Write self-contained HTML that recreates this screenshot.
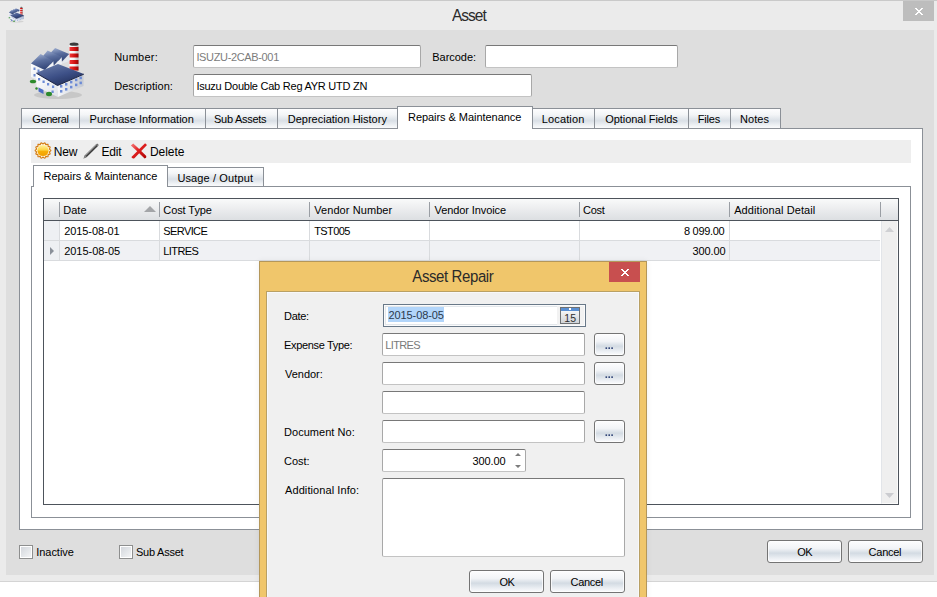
<!DOCTYPE html><html><head><meta charset="utf-8"><style>
html,body{margin:0;padding:0;}
body{width:937px;height:597px;position:relative;overflow:hidden;background:#fff;font-family:"Liberation Sans",sans-serif;}
.b{position:absolute;box-sizing:border-box;}
.t{position:absolute;white-space:nowrap;}
svg{position:absolute;overflow:visible;}
</style></head><body>
<div class="b" style="left:0px;top:0px;width:937px;height:582px;background:#ebebeb;border-top:1px solid #c9c9c9;border-bottom:1px solid #d4d4d4;"></div>
<svg style="left:8.4px;top:6.3px" width="17.3" height="16.9" preserveAspectRatio="none" viewBox="0 0 60 60">
<defs>
<linearGradient id="sfr1" x1="0" y1="0" x2="0.3" y2="1"><stop offset="0" stop-color="#a9b8d8"/><stop offset="0.5" stop-color="#5b6f9f"/><stop offset="1" stop-color="#34477a"/></linearGradient>
<linearGradient id="sfr2" x1="0" y1="0" x2="0.6" y2="1"><stop offset="0" stop-color="#6f82ae"/><stop offset="0.6" stop-color="#3d5087"/><stop offset="1" stop-color="#25335f"/></linearGradient>
<linearGradient id="schim" x1="0" y1="0" x2="1" y2="0"><stop offset="0" stop-color="#ffffff"/><stop offset="0.5" stop-color="#f4f4f4"/><stop offset="1" stop-color="#b8b8b8"/></linearGradient>
<linearGradient id="schimr" x1="0" y1="0" x2="1" y2="0"><stop offset="0" stop-color="#f03a3a"/><stop offset="0.6" stop-color="#d01010"/><stop offset="1" stop-color="#900808"/></linearGradient>
<linearGradient id="swl" x1="0" y1="0" x2="1" y2="1"><stop offset="0" stop-color="#ffffff"/><stop offset="1" stop-color="#dfe3ea"/></linearGradient>
<linearGradient id="swr" x1="0" y1="0" x2="1" y2="0"><stop offset="0" stop-color="#f6f7fa"/><stop offset="1" stop-color="#c4c9d2"/></linearGradient>
</defs>
<ellipse cx="30" cy="55" rx="24" ry="4" fill="#000" opacity=".10"/>
<!-- chimney -->
<rect x="41.5" y="4" width="9" height="27" fill="url(#schim)"/>
<rect x="41.5" y="7" width="9" height="4" fill="url(#schimr)"/>
<rect x="41.5" y="13.5" width="9" height="4" fill="url(#schimr)"/>
<rect x="41.5" y="20" width="9" height="4" fill="url(#schimr)"/>
<rect x="41.5" y="26.5" width="9" height="4" fill="url(#schimr)"/>
<ellipse cx="46" cy="4.2" rx="4.5" ry="1.6" fill="#3a3a3a"/>
<!-- back building walls -->
<polygon points="3,23.5 17,30 17,43 3,37" fill="url(#swl)"/>
<rect x="5.5" y="27.5" width="2" height="2.5" fill="#6d8ad0"/><rect x="9.5" y="29.5" width="2" height="2.5" fill="#6d8ad0"/>
<rect x="5.5" y="34" width="2" height="2.5" fill="#6d8ad0"/>
<!-- sawtooth roofs -->
<polygon points="41.2,14 41.5,21 33,24" fill="#e4e8ee"/>
<polygon points="19.6,16 27.1,8 41.2,14 33.5,22" fill="url(#sfr1)"/>
<polygon points="33.7,17 34,24 25.5,26.5" fill="#eceff4"/>
<polygon points="12.6,19 19.6,10.5 33.7,17 25.3,26" fill="url(#sfr1)"/>
<polygon points="25.3,21.2 26,28 16.8,30" fill="#f2f4f7"/>
<polygon points="3,23.5 12.6,14.1 25.3,21.2 16.8,30" fill="url(#sfr1)"/>
<!-- front building -->
<polygon points="8,33 29.5,45.5 29.8,57 8.5,46.5" fill="url(#swl)"/>
<polygon points="29.5,45.5 55.5,34 55.5,46 29.8,57" fill="url(#swr)"/>
<polygon points="8,33 30,24 55.8,34 29.5,45.5" fill="url(#sfr2)"/>
<path d="M8.5 33.3 L29.5 45.5 L55.8 34.2" stroke="#1c2444" stroke-width="1" fill="none"/>
<g fill="#6c8bd6">
<rect x="10" y="38" width="2.2" height="2.5"/><rect x="14.5" y="40.5" width="2.2" height="2.5"/><rect x="19" y="43" width="2.2" height="2.5"/><rect x="24" y="45.5" width="2.2" height="2.5"/>
<rect x="23.5" y="50.5" width="2.2" height="2.5"/>
<rect x="32" y="45" width="2.4" height="2.6"/><rect x="37" y="43" width="2.4" height="2.6"/><rect x="42" y="40.8" width="2.4" height="2.6"/><rect x="47" y="38.6" width="2.4" height="2.6"/><rect x="51.5" y="36.6" width="2.4" height="2.6"/>
<rect x="32" y="50" width="2.4" height="2.6"/><rect x="37" y="48" width="2.4" height="2.6"/><rect x="42" y="45.8" width="2.4" height="2.6"/><rect x="47" y="43.6" width="2.4" height="2.6"/><rect x="51.5" y="41.6" width="2.4" height="2.6"/>
</g>
<polygon points="10.5,47.5 15.5,50 15.5,54 10.5,51.5" fill="#4a6cc4"/>
<ellipse cx="5" cy="41.5" rx="3.2" ry="1.8" fill="#2c8a2c"/>
<ellipse cx="21" cy="54" rx="3" ry="2.2" fill="#2c8a2c"/>
<ellipse cx="8.5" cy="48.5" rx="1.2" ry="1.2" fill="#2c8a2c"/>
</svg>
<div class="t" style="left:452.0px;top:8px;font-size:15.5px;line-height:15.5px;color:#2a2a2a;letter-spacing:-1.0px;transform:scaleY(1.05);transform-origin:0 13px;">Asset</div>
<div class="b" style="left:903px;top:1px;width:31px;height:20px;background:#bdbdbd;"></div>
<svg style="left:915px;top:8px" width="8" height="7" viewBox="0 0 8 7" shape-rendering="crispEdges"><g fill="#fff"><rect x="0" y="0" width="1" height="1"/><rect x="1" y="0" width="1" height="1"/><rect x="6" y="0" width="1" height="1"/><rect x="7" y="0" width="1" height="1"/><rect x="1" y="1" width="1" height="1"/><rect x="2" y="1" width="1" height="1"/><rect x="5" y="1" width="1" height="1"/><rect x="6" y="1" width="1" height="1"/><rect x="2" y="2" width="1" height="1"/><rect x="3" y="2" width="1" height="1"/><rect x="4" y="2" width="1" height="1"/><rect x="5" y="2" width="1" height="1"/><rect x="3" y="3" width="1" height="1"/><rect x="4" y="3" width="1" height="1"/><rect x="2" y="4" width="1" height="1"/><rect x="3" y="4" width="1" height="1"/><rect x="4" y="4" width="1" height="1"/><rect x="5" y="4" width="1" height="1"/><rect x="1" y="5" width="1" height="1"/><rect x="2" y="5" width="1" height="1"/><rect x="5" y="5" width="1" height="1"/><rect x="6" y="5" width="1" height="1"/><rect x="0" y="6" width="1" height="1"/><rect x="1" y="6" width="1" height="1"/><rect x="6" y="6" width="1" height="1"/><rect x="7" y="6" width="1" height="1"/></g></svg>
<div class="b" style="left:6px;top:30px;width:928px;height:545px;background:#dedede;"></div>
<svg style="left:28px;top:40px" width="60" height="60" viewBox="0 0 60 60">
<defs>
<linearGradient id="fr1" x1="0" y1="0" x2="0.3" y2="1"><stop offset="0" stop-color="#a9b8d8"/><stop offset="0.5" stop-color="#5b6f9f"/><stop offset="1" stop-color="#34477a"/></linearGradient>
<linearGradient id="fr2" x1="0" y1="0" x2="0.6" y2="1"><stop offset="0" stop-color="#6f82ae"/><stop offset="0.6" stop-color="#3d5087"/><stop offset="1" stop-color="#25335f"/></linearGradient>
<linearGradient id="chim" x1="0" y1="0" x2="1" y2="0"><stop offset="0" stop-color="#ffffff"/><stop offset="0.5" stop-color="#f4f4f4"/><stop offset="1" stop-color="#b8b8b8"/></linearGradient>
<linearGradient id="chimr" x1="0" y1="0" x2="1" y2="0"><stop offset="0" stop-color="#f03a3a"/><stop offset="0.6" stop-color="#d01010"/><stop offset="1" stop-color="#900808"/></linearGradient>
<linearGradient id="wl" x1="0" y1="0" x2="1" y2="1"><stop offset="0" stop-color="#ffffff"/><stop offset="1" stop-color="#dfe3ea"/></linearGradient>
<linearGradient id="wr" x1="0" y1="0" x2="1" y2="0"><stop offset="0" stop-color="#f6f7fa"/><stop offset="1" stop-color="#c4c9d2"/></linearGradient>
</defs>
<ellipse cx="30" cy="55" rx="24" ry="4" fill="#000" opacity=".10"/>
<!-- chimney -->
<rect x="41.5" y="4" width="9" height="27" fill="url(#chim)"/>
<rect x="41.5" y="7" width="9" height="4" fill="url(#chimr)"/>
<rect x="41.5" y="13.5" width="9" height="4" fill="url(#chimr)"/>
<rect x="41.5" y="20" width="9" height="4" fill="url(#chimr)"/>
<rect x="41.5" y="26.5" width="9" height="4" fill="url(#chimr)"/>
<ellipse cx="46" cy="4.2" rx="4.5" ry="1.6" fill="#3a3a3a"/>
<!-- back building walls -->
<polygon points="3,23.5 17,30 17,43 3,37" fill="url(#wl)"/>
<rect x="5.5" y="27.5" width="2" height="2.5" fill="#6d8ad0"/><rect x="9.5" y="29.5" width="2" height="2.5" fill="#6d8ad0"/>
<rect x="5.5" y="34" width="2" height="2.5" fill="#6d8ad0"/>
<!-- sawtooth roofs -->
<polygon points="41.2,14 41.5,21 33,24" fill="#e4e8ee"/>
<polygon points="19.6,16 27.1,8 41.2,14 33.5,22" fill="url(#fr1)"/>
<polygon points="33.7,17 34,24 25.5,26.5" fill="#eceff4"/>
<polygon points="12.6,19 19.6,10.5 33.7,17 25.3,26" fill="url(#fr1)"/>
<polygon points="25.3,21.2 26,28 16.8,30" fill="#f2f4f7"/>
<polygon points="3,23.5 12.6,14.1 25.3,21.2 16.8,30" fill="url(#fr1)"/>
<!-- front building -->
<polygon points="8,33 29.5,45.5 29.8,57 8.5,46.5" fill="url(#wl)"/>
<polygon points="29.5,45.5 55.5,34 55.5,46 29.8,57" fill="url(#wr)"/>
<polygon points="8,33 30,24 55.8,34 29.5,45.5" fill="url(#fr2)"/>
<path d="M8.5 33.3 L29.5 45.5 L55.8 34.2" stroke="#1c2444" stroke-width="1" fill="none"/>
<g fill="#6c8bd6">
<rect x="10" y="38" width="2.2" height="2.5"/><rect x="14.5" y="40.5" width="2.2" height="2.5"/><rect x="19" y="43" width="2.2" height="2.5"/><rect x="24" y="45.5" width="2.2" height="2.5"/>
<rect x="23.5" y="50.5" width="2.2" height="2.5"/>
<rect x="32" y="45" width="2.4" height="2.6"/><rect x="37" y="43" width="2.4" height="2.6"/><rect x="42" y="40.8" width="2.4" height="2.6"/><rect x="47" y="38.6" width="2.4" height="2.6"/><rect x="51.5" y="36.6" width="2.4" height="2.6"/>
<rect x="32" y="50" width="2.4" height="2.6"/><rect x="37" y="48" width="2.4" height="2.6"/><rect x="42" y="45.8" width="2.4" height="2.6"/><rect x="47" y="43.6" width="2.4" height="2.6"/><rect x="51.5" y="41.6" width="2.4" height="2.6"/>
</g>
<polygon points="10.5,47.5 15.5,50 15.5,54 10.5,51.5" fill="#4a6cc4"/>
<ellipse cx="5" cy="41.5" rx="3.2" ry="1.8" fill="#2c8a2c"/>
<ellipse cx="21" cy="54" rx="3" ry="2.2" fill="#2c8a2c"/>
<ellipse cx="8.5" cy="48.5" rx="1.2" ry="1.2" fill="#2c8a2c"/>
</svg>
<div class="t" style="left:114.2px;top:52px;font-size:11px;line-height:11px;color:#000;letter-spacing:0.23px;">Number:</div>
<div class="b" style="left:193px;top:45px;width:228px;height:23px;background:#fff;border:1px solid #c3c3c3;border-top-color:#787878;border-left-color:#a8a8a8;border-right-color:#a8a8a8;border-radius:2px;"></div>
<div class="t" style="left:196.4px;top:52px;font-size:11px;line-height:11px;color:#7c7c7c;letter-spacing:-0.35px;">ISUZU-2CAB-001</div>
<div class="t" style="left:432.3px;top:52px;font-size:11px;line-height:11px;color:#000;letter-spacing:-0.04px;">Barcode:</div>
<div class="b" style="left:485px;top:45px;width:193px;height:23px;background:#fff;border:1px solid #c3c3c3;border-top-color:#787878;border-left-color:#a8a8a8;border-right-color:#a8a8a8;border-radius:2px;"></div>
<div class="t" style="left:114.2px;top:81px;font-size:11px;line-height:11px;color:#000;letter-spacing:0.06px;">Description:</div>
<div class="b" style="left:193px;top:74px;width:339px;height:23px;background:#fff;border:1px solid #c3c3c3;border-top-color:#787878;border-left-color:#a8a8a8;border-right-color:#a8a8a8;border-radius:2px;"></div>
<div class="t" style="left:196.4px;top:81px;font-size:11px;line-height:11px;color:#000;letter-spacing:-0.24px;">Isuzu Double Cab Reg AYR UTD ZN</div>
<div class="b" style="left:19px;top:128px;width:904px;height:402px;background:#fff;border:1px solid #8b9097;"></div>
<div class="b" style="left:21px;top:108px;width:59px;height:21px;background:linear-gradient(#fdfdfe 0%,#f3f5f7 30%,#d9dfe6 62%,#eef1f4 85%,#fafbfc 100%);border:1px solid #8b9097;"></div>
<div class="t" style="left:32.3px;top:114px;font-size:11px;line-height:11px;color:#000;letter-spacing:-0.42px;">General</div>
<div class="b" style="left:79px;top:108px;width:127px;height:21px;background:linear-gradient(#fdfdfe 0%,#f3f5f7 30%,#d9dfe6 62%,#eef1f4 85%,#fafbfc 100%);border:1px solid #8b9097;"></div>
<div class="t" style="left:89.6px;top:114px;font-size:11px;line-height:11px;color:#000;letter-spacing:-0.02px;">Purchase Information</div>
<div class="b" style="left:205px;top:108px;width:73px;height:21px;background:linear-gradient(#fdfdfe 0%,#f3f5f7 30%,#d9dfe6 62%,#eef1f4 85%,#fafbfc 100%);border:1px solid #8b9097;"></div>
<div class="t" style="left:214.0px;top:114px;font-size:11px;line-height:11px;color:#000;letter-spacing:-0.27px;">Sub Assets</div>
<div class="b" style="left:277px;top:108px;width:121px;height:21px;background:linear-gradient(#fdfdfe 0%,#f3f5f7 30%,#d9dfe6 62%,#eef1f4 85%,#fafbfc 100%);border:1px solid #8b9097;"></div>
<div class="t" style="left:287.7px;top:114px;font-size:11px;line-height:11px;color:#000;letter-spacing:0.01px;">Depreciation History</div>
<div class="b" style="left:532px;top:108px;width:63px;height:21px;background:linear-gradient(#fdfdfe 0%,#f3f5f7 30%,#d9dfe6 62%,#eef1f4 85%,#fafbfc 100%);border:1px solid #8b9097;"></div>
<div class="t" style="left:541.8px;top:114px;font-size:11px;line-height:11px;color:#000;letter-spacing:0.13px;">Location</div>
<div class="b" style="left:594px;top:108px;width:95px;height:21px;background:linear-gradient(#fdfdfe 0%,#f3f5f7 30%,#d9dfe6 62%,#eef1f4 85%,#fafbfc 100%);border:1px solid #8b9097;"></div>
<div class="t" style="left:605.3px;top:114px;font-size:11px;line-height:11px;color:#000;letter-spacing:-0.06px;">Optional Fields</div>
<div class="b" style="left:688px;top:108px;width:43px;height:21px;background:linear-gradient(#fdfdfe 0%,#f3f5f7 30%,#d9dfe6 62%,#eef1f4 85%,#fafbfc 100%);border:1px solid #8b9097;"></div>
<div class="t" style="left:697.8px;top:114px;font-size:11px;line-height:11px;color:#000;letter-spacing:-0.22px;">Files</div>
<div class="b" style="left:730px;top:108px;width:51px;height:21px;background:linear-gradient(#fdfdfe 0%,#f3f5f7 30%,#d9dfe6 62%,#eef1f4 85%,#fafbfc 100%);border:1px solid #8b9097;"></div>
<div class="t" style="left:740.0px;top:114px;font-size:11px;line-height:11px;color:#000;letter-spacing:0.05px;">Notes</div>
<div class="b" style="left:397px;top:106px;width:136px;height:23px;background:#fff;border:1px solid #8b9097;border-bottom:none;"></div>
<div class="t" style="left:408.0px;top:112px;font-size:11px;line-height:11px;color:#000;letter-spacing:-0.05px;">Repairs &amp; Maintenance</div>
<div class="b" style="left:31px;top:140px;width:880px;height:23px;background:#eeeeee;"></div>
<svg style="left:34px;top:142px" width="18" height="18" viewBox="0 0 18 18">
<defs><linearGradient id="sung" x1="0" y1="0" x2="0" y2="1"><stop offset="0" stop-color="#fff2a0"/><stop offset="0.48" stop-color="#fcd240"/><stop offset="0.54" stop-color="#f7b00a"/><stop offset="1" stop-color="#f2a000"/></linearGradient></defs>
<polygon points="16.85,8.50 16.65,8.93 16.15,9.31 15.65,9.63 15.39,9.96 15.48,10.37 15.80,10.88 16.08,11.43 16.07,11.91 15.70,12.21 15.10,12.33 14.50,12.40 14.12,12.58 14.03,12.99 14.09,13.59 14.10,14.21 13.89,14.64 13.43,14.75 12.83,14.60 12.26,14.40 11.84,14.40 11.58,14.73 11.38,15.30 11.12,15.86 10.75,16.15 10.28,16.05 9.81,15.65 9.38,15.23 9.00,15.05 8.62,15.23 8.19,15.65 7.72,16.05 7.25,16.15 6.88,15.86 6.62,15.30 6.42,14.73 6.16,14.40 5.74,14.40 5.17,14.60 4.57,14.75 4.11,14.64 3.90,14.21 3.91,13.59 3.97,12.99 3.88,12.58 3.50,12.40 2.90,12.33 2.30,12.21 1.93,11.91 1.92,11.43 2.20,10.88 2.52,10.37 2.61,9.96 2.35,9.63 1.85,9.31 1.35,8.93 1.15,8.50 1.35,8.07 1.85,7.69 2.35,7.37 2.61,7.04 2.52,6.63 2.20,6.12 1.92,5.57 1.93,5.09 2.30,4.79 2.90,4.67 3.50,4.60 3.88,4.42 3.97,4.01 3.91,3.41 3.90,2.79 4.11,2.36 4.57,2.25 5.17,2.40 5.74,2.60 6.16,2.60 6.42,2.27 6.62,1.70 6.88,1.14 7.25,0.85 7.72,0.95 8.19,1.35 8.62,1.77 9.00,1.95 9.38,1.77 9.81,1.35 10.28,0.95 10.75,0.85 11.12,1.14 11.38,1.70 11.58,2.27 11.84,2.60 12.26,2.60 12.83,2.40 13.43,2.25 13.89,2.36 14.10,2.79 14.09,3.41 14.03,4.01 14.12,4.42 14.50,4.60 15.10,4.67 15.70,4.79 16.07,5.09 16.08,5.57 15.80,6.12 15.48,6.63 15.39,7.04 15.65,7.37 16.15,7.69 16.65,8.07" fill="#fff8e4" stroke="#d47c14" stroke-width="1.15"/>
<circle cx="9" cy="8.5" r="5.6" fill="url(#sung)"/>
</svg>
<div class="t" style="left:53.8px;top:146px;font-size:12px;line-height:12px;color:#000;letter-spacing:-0.15px;">New</div>
<svg style="left:82px;top:142px" width="18" height="18" viewBox="0 0 18 18">
<path d="M1.5 16.5 L3 13.2 L14.2 2.2 L16.0 4.0 L4.8 15.0 Z" fill="#3c3c3c"/>
<path d="M3 13.2 L14.2 2.2 L14.9 2.9 L3.7 13.9 Z" fill="#9a9a9a"/>
<path d="M1.5 16.5 L3 13.2 L4.8 15.0 Z" fill="#8a8a8a"/>
<path d="M14.2 2.2 L15.2 1.4 L16.8 3.1 L16.0 4.0 Z" fill="#6a6a6a"/>
</svg>
<div class="t" style="left:101.6px;top:146px;font-size:12px;line-height:12px;color:#000;letter-spacing:-0.23px;">Edit</div>
<svg style="left:130px;top:142px" width="18" height="18" viewBox="0 0 18 18">
<defs><linearGradient id="xg" x1="0" y1="0" x2="1" y2="1"><stop offset="0" stop-color="#f58080"/><stop offset="0.45" stop-color="#e02020"/><stop offset="1" stop-color="#a80000"/></linearGradient></defs>
<path d="M0.9 3.6 L3.2 1.4 L9.2 7.1 L15.1 1.3 L17.0 3.0 L11.2 9.1 L16.3 14.1 Q16.8 16.4 14.6 16.6 L9.2 11.2 L4.4 16.2 Q2.0 17.0 1.4 15.0 L7.2 9.2 Z" fill="url(#xg)"/>
</svg>
<div class="t" style="left:149.9px;top:146px;font-size:12px;line-height:12px;color:#000;letter-spacing:-0.04px;">Delete</div>
<div class="b" style="left:31px;top:186px;width:880px;height:332px;background:#fff;border:1px solid #8b9097;"></div>
<div class="b" style="left:167px;top:167px;width:97px;height:20px;background:linear-gradient(#fdfdfe 0%,#f3f5f7 30%,#d9dfe6 62%,#eef1f4 85%,#fafbfc 100%);border:1px solid #8b9097;"></div>
<div class="t" style="left:177.4px;top:173px;font-size:11px;line-height:11px;color:#000;letter-spacing:0.12px;">Usage / Output</div>
<div class="b" style="left:33px;top:165px;width:135px;height:22px;background:#fff;border:1px solid #8b9097;border-bottom:none;"></div>
<div class="t" style="left:43.5px;top:171px;font-size:11px;line-height:11px;color:#000;letter-spacing:-0.02px;">Repairs &amp; Maintenance</div>
<div class="b" style="left:43px;top:198px;width:856px;height:307px;background:#fff;border:1px solid #4d535b;"></div>
<div class="b" style="left:44px;top:199px;width:854px;height:21px;background:linear-gradient(#f9fafa,#ebecee 50%,#dcdfe2);"></div>
<div class="b" style="left:44px;top:220px;width:854px;height:1px;background:#4d535b;"></div>
<div class="b" style="left:59px;top:202px;width:1px;height:15px;background:#9a9ea4;"></div>
<div class="b" style="left:159px;top:202px;width:1px;height:15px;background:#9a9ea4;"></div>
<div class="b" style="left:309px;top:202px;width:1px;height:15px;background:#9a9ea4;"></div>
<div class="b" style="left:429px;top:202px;width:1px;height:15px;background:#9a9ea4;"></div>
<div class="b" style="left:579px;top:202px;width:1px;height:15px;background:#9a9ea4;"></div>
<div class="b" style="left:729px;top:202px;width:1px;height:15px;background:#9a9ea4;"></div>
<div class="b" style="left:880px;top:202px;width:1px;height:15px;background:#9a9ea4;"></div>
<div class="t" style="left:63.2px;top:205px;font-size:11px;line-height:11px;color:#000;letter-spacing:0.03px;">Date</div>
<div class="t" style="left:163.3px;top:205px;font-size:11px;line-height:11px;color:#000;letter-spacing:-0.08px;">Cost Type</div>
<div class="t" style="left:314.2px;top:205px;font-size:11px;line-height:11px;color:#000;letter-spacing:0.08px;">Vendor Number</div>
<div class="t" style="left:434.5px;top:205px;font-size:11px;line-height:11px;color:#000;letter-spacing:-0.09px;">Vendor Invoice</div>
<div class="t" style="left:583.0px;top:205px;font-size:11px;line-height:11px;color:#000;letter-spacing:-0.23px;">Cost</div>
<div class="t" style="left:734.2px;top:205px;font-size:11px;line-height:11px;color:#000;letter-spacing:0.1px;">Additional Detail</div>
<svg style="left:144px;top:206px" width="12" height="6" viewBox="0 0 12 6"><path d="M0 6 L6 0 L12 6 Z" fill="#a3a5a8"/></svg>
<div class="b" style="left:44px;top:221px;width:836px;height:20px;background:#fff;"></div>
<div class="b" style="left:44px;top:241px;width:836px;height:20px;background:#f0f1f4;"></div>
<div class="b" style="left:44px;top:221px;width:15px;height:40px;background:#eef0f3;"></div>
<div class="b" style="left:44px;top:240px;width:836px;height:1px;background:#d9dbde;"></div>
<div class="b" style="left:44px;top:260px;width:836px;height:1px;background:#d9dbde;"></div>
<div class="b" style="left:59px;top:221px;width:1px;height:40px;background:#d9dbde;"></div>
<div class="b" style="left:159px;top:221px;width:1px;height:40px;background:#d9dbde;"></div>
<div class="b" style="left:309px;top:221px;width:1px;height:40px;background:#d9dbde;"></div>
<div class="b" style="left:429px;top:221px;width:1px;height:40px;background:#d9dbde;"></div>
<div class="b" style="left:579px;top:221px;width:1px;height:40px;background:#d9dbde;"></div>
<div class="b" style="left:729px;top:221px;width:1px;height:40px;background:#d9dbde;"></div>
<svg style="left:50px;top:247px" width="5" height="8" viewBox="0 0 5 8"><path d="M0 0 L4 4 L0 8 Z" fill="#8a9099"/></svg>
<div class="t" style="left:64.2px;top:226px;font-size:11px;line-height:11px;color:#000;letter-spacing:-0.08px;">2015-08-01</div>
<div class="t" style="left:163.3px;top:226px;font-size:11px;line-height:11px;color:#000;letter-spacing:-0.6px;">SERVICE</div>
<div class="t" style="left:314.2px;top:226px;font-size:11px;line-height:11px;color:#000;letter-spacing:-0.6px;">TST005</div>
<div class="t" style="left:684.0px;top:226px;font-size:11px;line-height:11px;color:#000;letter-spacing:-0.3px;">8 099.00</div>
<div class="t" style="left:64.2px;top:246px;font-size:11px;line-height:11px;color:#000;letter-spacing:-0.03px;">2015-08-05</div>
<div class="t" style="left:163.3px;top:246px;font-size:11px;line-height:11px;color:#000;letter-spacing:-0.6px;">LITRES</div>
<div class="t" style="left:692.4px;top:246px;font-size:11px;line-height:11px;color:#000;letter-spacing:-0.1px;">300.00</div>
<div class="b" style="left:881px;top:221px;width:17px;height:283px;background:#efefef;border-left:1px solid #e2e5e9;border-right:1px solid #fbfbfb;border-bottom:1px solid #fbfbfb;"></div>
<svg style="left:885px;top:227px" width="9" height="5" viewBox="0 0 9 5"><path d="M0 5 L4.5 0 L9 5 Z" fill="#cfd0d3"/></svg>
<svg style="left:885px;top:493px" width="9" height="5" viewBox="0 0 9 5"><path d="M0 0 L4.5 5 L9 0 Z" fill="#cbccd0"/></svg>
<div class="b" style="left:19px;top:545px;width:14px;height:14px;border:1px solid #8e8f8f;background:linear-gradient(135deg,#d0d4da,#f6f7f8);box-shadow:inset 0 0 0 1px #fff;"></div>
<div class="t" style="left:36.2px;top:547px;font-size:11px;line-height:11px;color:#000;letter-spacing:-0.03px;">Inactive</div>
<div class="b" style="left:119px;top:545px;width:14px;height:14px;border:1px solid #8e8f8f;background:linear-gradient(135deg,#d0d4da,#f6f7f8);box-shadow:inset 0 0 0 1px #fff;"></div>
<div class="t" style="left:136.0px;top:547px;font-size:11px;line-height:11px;color:#000;letter-spacing:-0.24px;">Sub Asset</div>
<div class="b" style="left:767px;top:540px;width:75px;height:23px;background:linear-gradient(#fdfdfe 0%,#f2f4f7 35%,#d3dbe3 58%,#eef1f5 85%,#fbfcfd 100%);border:1px solid #747474;border-radius:3px;box-shadow:inset 0 0 0 1px rgba(255,255,255,.75);"></div>
<div class="t" style="left:797.2px;top:547px;font-size:11px;line-height:11px;color:#000;letter-spacing:-0.6px;">OK</div>
<div class="b" style="left:848px;top:540px;width:75px;height:23px;background:linear-gradient(#fdfdfe 0%,#f2f4f7 35%,#d3dbe3 58%,#eef1f5 85%,#fbfcfd 100%);border:1px solid #747474;border-radius:3px;box-shadow:inset 0 0 0 1px rgba(255,255,255,.75);"></div>
<div class="t" style="left:868.6px;top:547px;font-size:11px;line-height:11px;color:#000;letter-spacing:-0.26px;">Cancel</div>
<div class="b" style="left:259px;top:261px;width:388px;height:359px;background:#f0c66b;border:1px solid #b4975a;box-shadow:0 0 6px rgba(0,0,0,.07);"></div>
<div class="t" style="left:412.3px;top:269px;font-size:15px;line-height:15px;color:#2a2a2a;letter-spacing:-0.4px;transform:scaleY(1.07);transform-origin:0 13px;">Asset Repair</div>
<div class="b" style="left:609px;top:262px;width:31px;height:20px;background:#c84f4f;"></div>
<svg style="left:621px;top:269px" width="8" height="7" viewBox="0 0 8 7" shape-rendering="crispEdges"><g fill="#fff"><rect x="0" y="0" width="1" height="1"/><rect x="1" y="0" width="1" height="1"/><rect x="6" y="0" width="1" height="1"/><rect x="7" y="0" width="1" height="1"/><rect x="1" y="1" width="1" height="1"/><rect x="2" y="1" width="1" height="1"/><rect x="5" y="1" width="1" height="1"/><rect x="6" y="1" width="1" height="1"/><rect x="2" y="2" width="1" height="1"/><rect x="3" y="2" width="1" height="1"/><rect x="4" y="2" width="1" height="1"/><rect x="5" y="2" width="1" height="1"/><rect x="3" y="3" width="1" height="1"/><rect x="4" y="3" width="1" height="1"/><rect x="2" y="4" width="1" height="1"/><rect x="3" y="4" width="1" height="1"/><rect x="4" y="4" width="1" height="1"/><rect x="5" y="4" width="1" height="1"/><rect x="1" y="5" width="1" height="1"/><rect x="2" y="5" width="1" height="1"/><rect x="5" y="5" width="1" height="1"/><rect x="6" y="5" width="1" height="1"/><rect x="0" y="6" width="1" height="1"/><rect x="1" y="6" width="1" height="1"/><rect x="6" y="6" width="1" height="1"/><rect x="7" y="6" width="1" height="1"/></g></svg>
<div class="b" style="left:266px;top:291px;width:374px;height:329px;background:#f0f0f0;border:1px solid #b9a064;box-shadow:inset 0 0 0 1px #f7f8fa;"></div>
<div class="t" style="left:284.0px;top:311px;font-size:11px;line-height:11px;color:#000;letter-spacing:-0.3px;">Date:</div>
<div class="t" style="left:284.0px;top:340px;font-size:11px;line-height:11px;color:#000;letter-spacing:-0.33px;">Expense Type:</div>
<div class="t" style="left:285.0px;top:369px;font-size:11px;line-height:11px;color:#000;letter-spacing:-0.02px;">Vendor:</div>
<div class="t" style="left:284.0px;top:427px;font-size:11px;line-height:11px;color:#000;letter-spacing:0.04px;">Document No:</div>
<div class="t" style="left:284.0px;top:456px;font-size:11px;line-height:11px;color:#000;letter-spacing:0px;">Cost:</div>
<div class="t" style="left:285.0px;top:485px;font-size:11px;line-height:11px;color:#000;letter-spacing:0.09px;">Additional Info:</div>
<div class="b" style="left:383px;top:304px;width:203px;height:23px;background:#fff;border:1px solid #687888;box-shadow:inset 0 0 0 1px #fafbfc,inset 0 0 0 2px #e3e7eb;"></div>
<div class="b" style="left:557px;top:306px;width:27px;height:19px;background:#f2f2f2;"></div>
<div class="b" style="left:388px;top:307px;width:56px;height:15px;background:#b2d5fa;"></div>
<div class="t" style="left:388.5px;top:310px;font-size:11px;line-height:11px;color:#2c3a4c;letter-spacing:-0.09px;">2015-08-05</div>
<svg style="left:560px;top:307px" width="20" height="17" viewBox="0 0 20 17">
<defs><linearGradient id="calg" x1="0" y1="0" x2="0" y2="1"><stop offset="0" stop-color="#ffffff"/><stop offset="1" stop-color="#cfd2d6"/></linearGradient></defs>
<rect x="0.5" y="0.5" width="19" height="16" fill="url(#calg)" stroke="#6e7174"/>
<rect x="1" y="1" width="18" height="3" fill="#5a8fd2"/>
<rect x="9" y="1" width="2" height="2" fill="#fff"/>
<text x="10.2" y="14.6" font-family="Liberation Sans" font-size="10.5" text-anchor="middle" fill="#2e2e2e">15</text>
</svg>
<div class="b" style="left:382px;top:333px;width:203px;height:23px;background:#fff;border:1px solid #c3c3c3;border-top-color:#787878;border-left-color:#a8a8a8;border-right-color:#a8a8a8;border-radius:2px;"></div>
<div class="t" style="left:385.2px;top:340px;font-size:11px;line-height:11px;color:#7a7a7a;letter-spacing:-0.6px;">LITRES</div>
<div class="b" style="left:594px;top:333px;width:31px;height:23px;background:linear-gradient(#fdfdfe 0%,#f2f4f7 35%,#d3dbe3 58%,#eef1f5 85%,#fbfcfd 100%);border:1px solid #747474;border-radius:3px;box-shadow:inset 0 0 0 1px rgba(255,255,255,.75);"></div>
<svg style="left:605px;top:347px" width="9" height="3" viewBox="0 0 9 3"><g fill="#34487a"><rect x="0.5" y="0.3" width="1.6" height="1.7"/><rect x="3.4" y="0.3" width="1.6" height="1.7"/><rect x="6.3" y="0.3" width="1.6" height="1.7"/></g></svg>
<div class="b" style="left:382px;top:362px;width:203px;height:23px;background:#fff;border:1px solid #c3c3c3;border-top-color:#787878;border-left-color:#a8a8a8;border-right-color:#a8a8a8;border-radius:2px;"></div>
<div class="b" style="left:594px;top:362px;width:31px;height:23px;background:linear-gradient(#fdfdfe 0%,#f2f4f7 35%,#d3dbe3 58%,#eef1f5 85%,#fbfcfd 100%);border:1px solid #747474;border-radius:3px;box-shadow:inset 0 0 0 1px rgba(255,255,255,.75);"></div>
<svg style="left:605px;top:376px" width="9" height="3" viewBox="0 0 9 3"><g fill="#34487a"><rect x="0.5" y="0.3" width="1.6" height="1.7"/><rect x="3.4" y="0.3" width="1.6" height="1.7"/><rect x="6.3" y="0.3" width="1.6" height="1.7"/></g></svg>
<div class="b" style="left:382px;top:391px;width:203px;height:23px;background:#fff;border:1px solid #c3c3c3;border-top-color:#787878;border-left-color:#a8a8a8;border-right-color:#a8a8a8;border-radius:2px;"></div>
<div class="b" style="left:382px;top:420px;width:203px;height:23px;background:#fff;border:1px solid #c3c3c3;border-top-color:#787878;border-left-color:#a8a8a8;border-right-color:#a8a8a8;border-radius:2px;"></div>
<div class="b" style="left:594px;top:420px;width:31px;height:23px;background:linear-gradient(#fdfdfe 0%,#f2f4f7 35%,#d3dbe3 58%,#eef1f5 85%,#fbfcfd 100%);border:1px solid #747474;border-radius:3px;box-shadow:inset 0 0 0 1px rgba(255,255,255,.75);"></div>
<svg style="left:605px;top:434px" width="9" height="3" viewBox="0 0 9 3"><g fill="#34487a"><rect x="0.5" y="0.3" width="1.6" height="1.7"/><rect x="3.4" y="0.3" width="1.6" height="1.7"/><rect x="6.3" y="0.3" width="1.6" height="1.7"/></g></svg>
<div class="b" style="left:382px;top:449px;width:144px;height:23px;background:#fff;border:1px solid #c3c3c3;border-top-color:#787878;border-left-color:#a8a8a8;border-right-color:#a8a8a8;border-radius:2px;"></div>
<div class="t" style="left:472.5px;top:456px;font-size:11px;line-height:11px;color:#000;letter-spacing:-0.1px;">300.00</div>
<svg style="left:514px;top:452px" width="8" height="17" viewBox="0 0 8 17"><path d="M1 4 L4 1 L7 4 Z M1 13 L4 16 L7 13 Z" fill="#7c7c7c"/></svg>
<div class="b" style="left:382px;top:478px;width:243px;height:79px;background:#fff;border:1px solid #c3c3c3;border-top-color:#787878;border-left-color:#a8a8a8;border-right-color:#a8a8a8;border-radius:2px;"></div>
<div class="b" style="left:469px;top:570px;width:75px;height:23px;background:linear-gradient(#fdfdfe 0%,#f2f4f7 35%,#d3dbe3 58%,#eef1f5 85%,#fbfcfd 100%);border:1px solid #747474;border-radius:3px;box-shadow:inset 0 0 0 1px rgba(255,255,255,.75);"></div>
<div class="t" style="left:499.6px;top:577px;font-size:11px;line-height:11px;color:#000;letter-spacing:-0.6px;">OK</div>
<div class="b" style="left:550px;top:570px;width:75px;height:23px;background:linear-gradient(#fdfdfe 0%,#f2f4f7 35%,#d3dbe3 58%,#eef1f5 85%,#fbfcfd 100%);border:1px solid #747474;border-radius:3px;box-shadow:inset 0 0 0 1px rgba(255,255,255,.75);"></div>
<div class="t" style="left:570.6px;top:577px;font-size:11px;line-height:11px;color:#000;letter-spacing:-0.32px;">Cancel</div>
</body></html>
